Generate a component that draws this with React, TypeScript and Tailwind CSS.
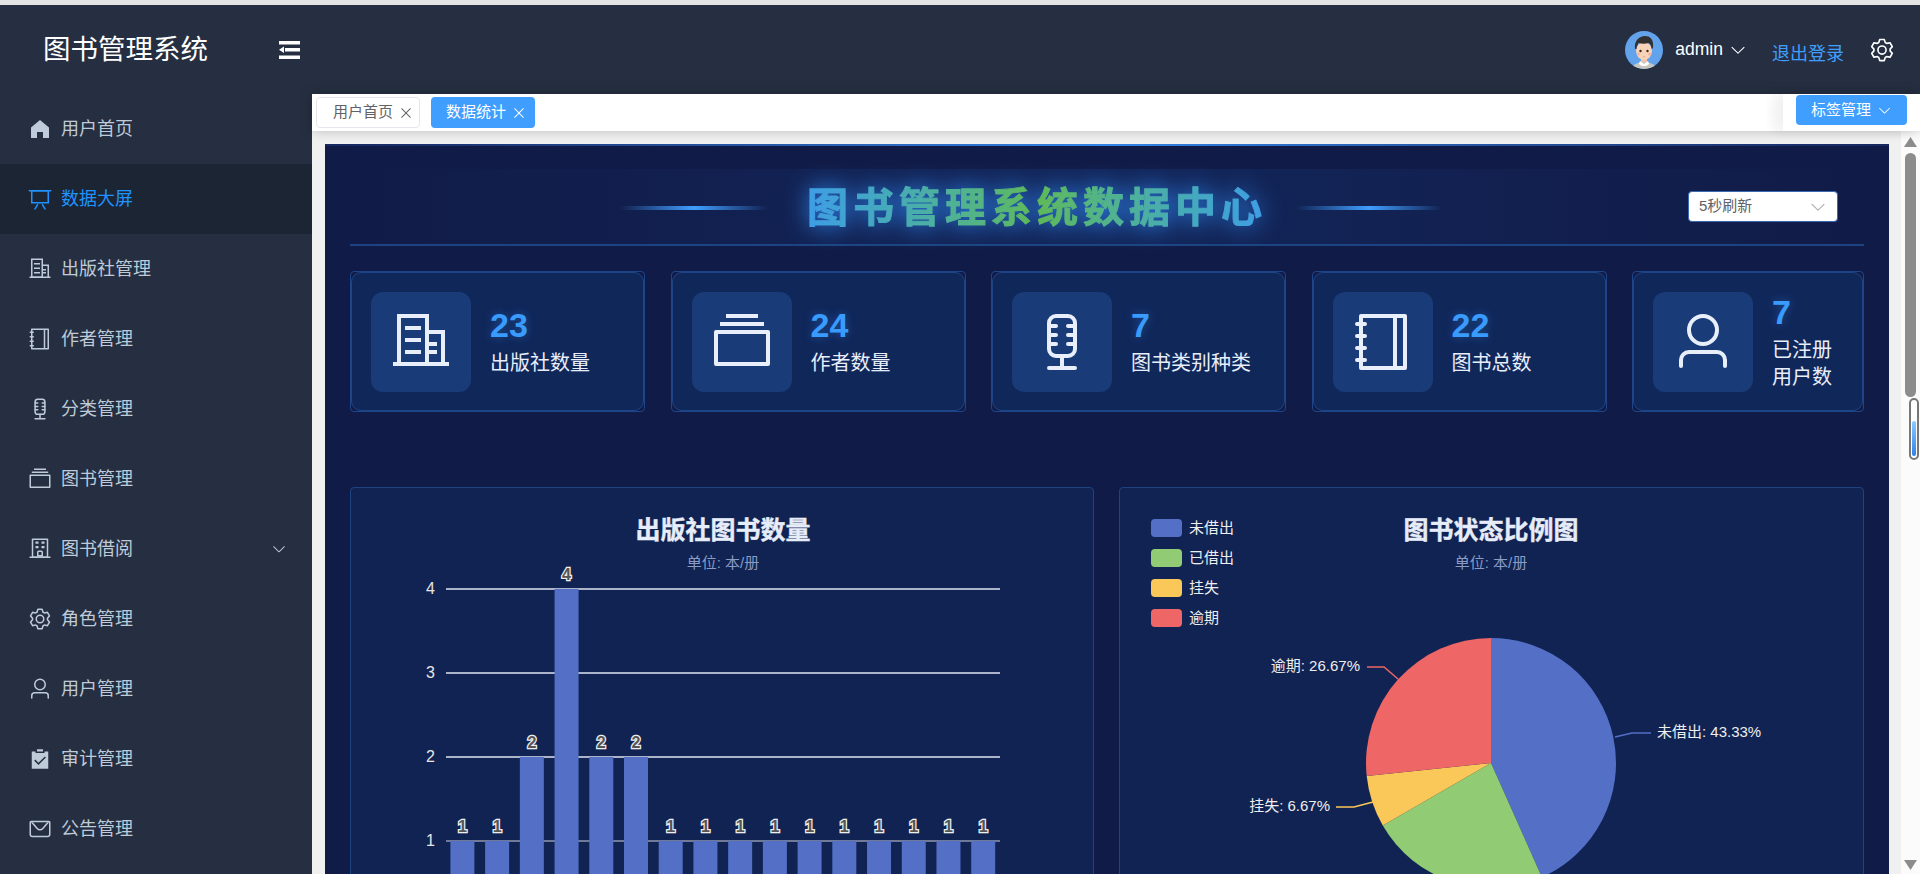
import type { ReactNode } from "react";

const P = {
  home: <path d="M512 128 128 447.936V896h255.936V640H640v256h255.936V447.936z" />,
  board: (
    <>
      <path d="M32 128h960v64H32z" />
      <path d="M192 192v448h640V192zm-64-64h768v576H128z" />
      <path d="M322.176 960H248.32l144.64-250.56 55.424 32zm453.888 0h-73.856L576 741.44l55.424-32z" />
    </>
  ),
  office: (
    <>
      <path d="M192 128v704h384V128zm-64-64h512v832H128z" />
      <path d="M256 256h256v64H256zm0 192h256v64H256zm0 192h256v64H256zm384-128h128v64H640zm0 128h128v64H640z" />
      <path d="M640 320h256v576h-64V384H640z" />
      <path d="M64 832h896v64H64z" />
    </>
  ),
  notebook: (
    <>
      <path d="M192 128v768h640V128zm-32-64h704a32 32 0 0 1 32 32v832a32 32 0 0 1-32 32H160a32 32 0 0 1-32-32V96a32 32 0 0 1 32-32" />
      <path d="M672 128h64v768h-64zM96 192h128q32 0 32 32t-32 32H96q-32 0-32-32t32-32m0 192h128q32 0 32 32t-32 32H96q-32 0-32-32t32-32m0 192h128q32 0 32 32t-32 32H96q-32 0-32-32t32-32m0 192h128q32 0 32 32t-32 32H96q-32 0-32-32t32-32" />
    </>
  ),
  mic: (
    <g fill="none" stroke="currentColor" strokeWidth="64" strokeLinecap="round">
      <rect x="304" y="96" width="416" height="640" rx="112" />
      <path d="M304 256h112M608 256h112M304 400h112M608 400h112M304 544h112M608 544h112M512 736v192M304 928h416" />
    </g>
  ),
  files: <path d="M128 384v448h768V384zm-32-64h832a32 32 0 0 1 32 32v512a32 32 0 0 1-32 32H96a32 32 0 0 1-32-32V352a32 32 0 0 1 32-32m64-128h704v64H160zm96-128h512v64H256z" />,
  school: (
    <>
      <path d="M224 128v704h576V128zm-32-64h640a32 32 0 0 1 32 32v768H160V96a32 32 0 0 1 32-32" />
      <path d="M64 832h896v64H64zm256-640h128v96H320zm256 0h128v96H576zM320 384h128v96H320zm256 0h128v96H576z" />
      <path d="M384 832h256V640a64 64 0 0 0-64-64H448a64 64 0 0 0-64 64zm64-64h128V640H448z" fillRule="evenodd" />
    </>
  ),
  setting: <path d="M600.704 64a32 32 0 0 1 30.464 22.208l35.2 109.376c14.784 7.232 28.928 15.36 42.432 24.512l112.384-24.192a32 32 0 0 1 34.432 15.36L944.32 364.8a32 32 0 0 1-4.032 37.504l-77.12 85.12a357 357 0 0 1 0 49.024l77.12 85.248a32 32 0 0 1 4.032 37.504l-88.704 153.6a32 32 0 0 1-34.432 15.296L708.8 803.904c-13.44 9.088-27.648 17.28-42.368 24.512l-35.264 109.376A32 32 0 0 1 600.704 960H423.296a32 32 0 0 1-30.464-22.208L357.696 828.48a352 352 0 0 1-42.56-24.64l-112.32 24.256a32 32 0 0 1-34.432-15.36L79.68 659.2a32 32 0 0 1 4.032-37.504l77.12-85.248a357 357 0 0 1 0-48.896l-77.12-85.248A32 32 0 0 1 79.68 364.8l88.704-153.6a32 32 0 0 1 34.432-15.296l112.32 24.256c13.568-9.152 27.776-17.408 42.56-24.64l35.2-109.312A32 32 0 0 1 423.232 64H600.64zm-23.424 64H446.72l-36.352 113.088-24.512 11.968a294 294 0 0 0-34.816 20.096l-22.656 15.36-116.224-25.088-65.28 113.152 79.68 88.192-1.92 27.136a293 293 0 0 0 0 40.192l1.92 27.136-79.808 88.192 65.344 113.152 116.224-25.024 22.656 15.296a294 294 0 0 0 34.816 20.096l24.512 11.968L446.72 896h130.688l36.48-113.152 24.448-11.904a288 288 0 0 0 34.752-20.096l22.592-15.296 116.288 25.024 65.28-113.152-79.744-88.192 1.92-27.136a293 293 0 0 0 0-40.256l-1.92-27.136 79.808-88.128-65.344-113.152-116.288 24.96-22.592-15.232a288 288 0 0 0-34.752-20.096l-24.448-11.904L577.344 128zM512 320a192 192 0 1 1 0 384 192 192 0 0 1 0-384m0 64a128 128 0 1 0 0 256 128 128 0 0 0 0-256" />,
  user: <path d="M512 512a192 192 0 1 0 0-384 192 192 0 0 0 0 384m0 64a256 256 0 1 1 0-512 256 256 0 0 1 0 512m320 320v-96a96 96 0 0 0-96-96H288a96 96 0 0 0-96 96v96a32 32 0 1 1-64 0v-96a160 160 0 0 1 160-160h448a160 160 0 0 1 160 160v96a32 32 0 1 1-64 0" />,
  checked: <path d="M704 192h160v736H160V192h160.064v64H704zM311.616 537.28l-45.312 45.248L447.36 763.52l316.8-316.8-45.312-45.184L447.36 673.024zM384 192V96h256v96z" />,
  message: (
    <>
      <path d="M128 224v512a64 64 0 0 0 64 64h640a64 64 0 0 0 64-64V224zm0-64h768a64 64 0 0 1 64 64v512a128 128 0 0 1-128 128H192A128 128 0 0 1 64 736V224a64 64 0 0 1 64-64" />
      <path d="M904 224 656.512 506.88a192 192 0 0 1-289.024 0L120 224zm-698.944 0 210.56 240.704a128 128 0 0 0 192.704 0L818.944 224H205.056" />
    </>
  ),
  down: <path d="M831.872 340.864 512 652.672 192.128 340.864a30.592 30.592 0 0 0-42.752 0 29.12 29.12 0 0 0 0 41.6L489.664 714.24a32 32 0 0 0 44.672 0l340.288-331.712a29.12 29.12 0 0 0 0-41.728 30.592 30.592 0 0 0-42.752 0z" />,
  close: <path d="M764.288 214.592 512 466.88 259.712 214.592a31.936 31.936 0 0 0-45.12 45.12L466.752 512 214.528 764.224a31.936 31.936 0 1 0 45.12 45.184L512 557.184l252.288 252.288a31.936 31.936 0 0 0 45.12-45.12L557.12 512.064l252.288-252.352a31.936 31.936 0 1 0-45.12-45.184z" />,
};

function Icon({ name, className }: { name: keyof typeof P; className?: string }) {
  return (
    <svg viewBox="0 0 1024 1024" fill="currentColor" className={className}>
      {P[name]}
    </svg>
  );
}

const menu: { label: string; icon: keyof typeof P; active?: boolean; arrow?: boolean }[] = [
  { label: "用户首页", icon: "home" },
  { label: "数据大屏", icon: "board", active: true },
  { label: "出版社管理", icon: "office" },
  { label: "作者管理", icon: "notebook" },
  { label: "分类管理", icon: "mic" },
  { label: "图书管理", icon: "files" },
  { label: "图书借阅", icon: "school", arrow: true },
  { label: "角色管理", icon: "setting" },
  { label: "用户管理", icon: "user" },
  { label: "审计管理", icon: "checked" },
  { label: "公告管理", icon: "message" },
];

const stats: { value: number; label: string; icon: keyof typeof P }[] = [
  { value: 23, label: "出版社数量", icon: "office" },
  { value: 24, label: "作者数量", icon: "files" },
  { value: 7, label: "图书类别种类", icon: "mic" },
  { value: 22, label: "图书总数", icon: "notebook" },
  { value: 7, label: "已注册用户数", icon: "user" },
];

const barValues = [1, 1, 2, 4, 2, 2, 1, 1, 1, 1, 1, 1, 1, 1, 1, 1];
const gridY: Record<number, number> = { 4: 589, 3: 673, 2: 757, 1: 841 };

const pieData = [
  { name: "未借出", pct: 43.33, color: "#5470c6" },
  { name: "已借出", pct: 23.33, color: "#91cc75" },
  { name: "挂失", pct: 6.67, color: "#fac858" },
  { name: "逾期", pct: 26.67, color: "#ee6666" },
];

function wedge(cx: number, cy: number, r: number, from: number, to: number) {
  const a = (from / 100) * Math.PI * 2;
  const b = (to / 100) * Math.PI * 2;
  const large = to - from > 50 ? 1 : 0;
  return `M${cx} ${cy}L${cx + r * Math.sin(a)} ${cy - r * Math.cos(a)}A${r} ${r} 0 ${large} 1 ${cx + r * Math.sin(b)} ${cy - r * Math.cos(b)}Z`;
}

function Avatar() {
  return (
    <svg viewBox="0 0 38 38" className="h-[38px] w-[38px] shrink-0">
      <defs>
        <clipPath id="av">
          <circle cx="19" cy="19" r="19" />
        </clipPath>
      </defs>
      <g clipPath="url(#av)">
        <rect width="38" height="38" fill="#62a3ec" />
        <path d="M7 38c1-5 6-7 12-7s11 2 12 7z" fill="#c9c6c2" />
        <path d="M15 30l4 3 4-3 1 3-3 2h-4l-3-2z" fill="#fff" />
        <rect x="16" y="25" width="6" height="6" fill="#f2c2a4" />
        <ellipse cx="19" cy="20" rx="8" ry="9" fill="#f8d3b8" />
        <path d="M10 18c-1-8 4-13 10-13 5 0 9 3 8 12l-1.500 1c0-3-1-5-3-6-3 1-7 1-10 0-1 2-2 4-2 6z" fill="#33312f" />
        <circle cx="15.500" cy="20" r="1.200" fill="#3a2a20" />
        <circle cx="22.500" cy="20" r="1.200" fill="#3a2a20" />
        <circle cx="13.500" cy="23" r="1.500" fill="#f4b3a2" />
        <circle cx="24.500" cy="23" r="1.500" fill="#f4b3a2" />
        <path d="M17.500 25.500h3l-1.500 1z" fill="#e58a78" />
      </g>
    </svg>
  );
}

function Tag({ label, active }: { label: string; active?: boolean }) {
  return (
    <div
      className={
        active
          ? "flex h-[31px] w-[104px] items-center rounded-[4px] bg-[#409eff] pl-[15px] text-[15px] text-white"
          : "flex h-[31px] w-[104px] items-center rounded-[4px] border border-[#e4e7ed] bg-white pl-4 text-[15px] text-[#606266]"
      }
    >
      <span className="w-[60px]">{label}</span>
      <Icon name="close" className="ml-[5px] h-4 w-4" />
    </div>
  );
}

function StatCard({ value, label, icon, wide }: { value: number; label: string; icon: keyof typeof P; wide: boolean }) {
  return (
    <div className={wide ? "h-[141px] w-[295px] rounded-[4px] border border-[#1e4587]" : "h-[141px] min-w-0 flex-1 rounded-[4px] border border-[#1e4587]"}>
      <div className="flex h-full items-center rounded-[10px] border border-[#1e4587] bg-[#10275a] pl-[19px] pr-[20px]">
        <div className="flex h-[100px] w-[100px] shrink-0 items-center justify-center rounded-[12px] bg-[#193c79] text-[#e8eefa]">
          <Icon name={icon} className="h-16 w-16" />
        </div>
        <div className="ml-[19px] min-w-0 flex-1">
          <div className="mb-[6px] h-[38px] text-[34px] leading-[38px] font-bold text-[#3a9bff] [text-shadow:0_0_10px_rgba(64,158,255,0.35)]">{value}</div>
          <div className="text-[20px] leading-[27px] text-[#e8eefa]">{label}</div>
        </div>
      </div>
    </div>
  );
}

function BarChart() {
  return (
    <svg className="block h-[500px] w-full" fontFamily="'Liberation Sans','Noto Sans CJK SC',sans-serif">
      <g transform="translate(-351 -488)">
        <text x="723" y="539" textAnchor="middle" fontSize="25" fontWeight="700" fill="#e6ecf8" stroke="#e6ecf8" strokeWidth="0.400">出版社图书数量</text>
        <text x="723" y="568" textAnchor="middle" fontSize="15" fill="#8a9bc4">单位: 本/册</text>
        {[4, 3, 2, 1].map((v) => (
          <g key={v}>
            <line x1="446" x2="1000" y1={gridY[v]} y2={gridY[v]} stroke={v === 1 ? "#8f98b0" : "#e0e6f1"} strokeWidth="1.500" />
            <text x="435" y={gridY[v] + 5} textAnchor="end" fontSize="16" fill="#e6e6e6">{v}</text>
          </g>
        ))}
        {barValues.map((v, i) => {
          const cx = 462.4 + 34.72 * i;
          return (
            <g key={i}>
              <rect x={cx - 12} y={gridY[v]} width="24" height={900 - gridY[v]} fill="#5470c6" />
              <text x={cx} y={gridY[v] - 9} textAnchor="middle" fontSize="16" fontWeight="700" fill="#555" stroke="#eeeeee" strokeWidth="2.500" paintOrder="stroke">{v}</text>
            </g>
          );
        })}
      </g>
    </svg>
  );
}

function PieChart() {
  let acc = 0;
  return (
    <svg className="block h-[500px] w-full" fontFamily="'Liberation Sans','Noto Sans CJK SC',sans-serif">
      <g transform="translate(-1120 -488)">
        {pieData.map((d, i) => (
          <g key={d.name}>
            <rect x="1151" y={519 + i * 30} width="31" height="18" rx="4" fill={d.color} />
            <text x="1189" y={533 + i * 30} fontSize="15" fill="#eeeeee">{d.name}</text>
          </g>
        ))}
        <text x="1491" y="539" textAnchor="middle" fontSize="25" fontWeight="700" fill="#e6ecf8" stroke="#e6ecf8" strokeWidth="0.400">图书状态比例图</text>
        <text x="1491" y="568" textAnchor="middle" fontSize="15" fill="#8a9bc4">单位: 本/册</text>
        {pieData.map((d) => {
          const from = acc;
          acc += d.pct;
          return <path key={d.name} d={wedge(1491, 763, 125, from, acc)} fill={d.color} />;
        })}
        <polyline points="1615,737 1632,733 1651,733" fill="none" stroke="#5470c6" strokeWidth="1.500" />
        <polyline points="1398,679 1384,667 1367,667" fill="none" stroke="#ee6666" strokeWidth="1.500" />
        <polyline points="1373,802 1354,807 1336,807" fill="none" stroke="#fac858" strokeWidth="1.500" />
        <text x="1657" y="737" fontSize="15" fill="#eeeeee">未借出: 43.33%</text>
        <text x="1360" y="671" textAnchor="end" fontSize="15" fill="#eeeeee">逾期: 26.67%</text>
        <text x="1330" y="811" textAnchor="end" fontSize="15" fill="#eeeeee">挂失: 6.67%</text>
      </g>
    </svg>
  );
}

function Scrollbar() {
  return (
    <div className="flex w-[19px] shrink-0 flex-col items-start bg-[#fbfbfb] pl-[3px] pt-[6px]">
      <svg viewBox="0 0 13 10" className="h-[10px] w-[13px] fill-[#8c8c8c]">
        <path d="M6.500 0 13 10H0z" />
      </svg>
      <div className="ml-px mt-[6px] h-[244px] w-[11px] shrink-0 rounded-full bg-[#8c8c8c]" />
      <div className="ml-[5px] mt-px flex h-[62px] w-[10px] shrink-0 items-end justify-center rounded-full border-2 border-[#777] bg-white pb-[2px]">
        <div className="h-[35px] w-[4px] rounded-full bg-linear-to-b from-[#8ccaff] to-[#2f80ed]" />
      </div>
      <svg viewBox="0 0 13 10" className="mb-[4px] mt-auto h-[10px] w-[13px] fill-[#8c8c8c]">
        <path d="M0 0h13L6.500 10z" />
      </svg>
    </div>
  );
}

export default function App() {
  return (
    <div className="flex h-screen w-full flex-col overflow-hidden bg-[#f0f0f0] font-['Liberation_Sans','Noto_Sans_CJK_SC',sans-serif]">
      <div className="h-[5px] shrink-0 bg-[#e3e3e3]" />
      <header className="flex h-[89px] shrink-0 items-center bg-[#252f41] pr-[25px] text-white">
        <div className="ml-[43px] w-[236px] text-[27.500px] whitespace-nowrap">图书管理系统</div>
        <svg viewBox="0 0 21 18" className="h-[18px] w-[21px] fill-white">
          <path d="M0 0h21v3.500H0zM6 7h15v3.500H6zM0 14.500h21V18H0zM0 8.700 5 5.500v6.500z" />
        </svg>
        <div className="ml-auto flex items-center">
          <Avatar />
          <span className="ml-3 text-[17.500px]">admin</span>
          <Icon name="down" className="ml-[6px] h-[18px] w-[18px]" />
          <span className="ml-[25px] mt-[9px] text-[18px] text-[#409eff]">退出登录</span>
          <Icon name="setting" className="ml-[25px] h-[26px] w-[26px]" />
        </div>
      </header>
      <div className="flex min-h-0 flex-1">
        <aside className="w-[312px] shrink-0 bg-[#252f41]">
          {menu.map((m) => (
            <div
              key={m.label}
              className={
                m.active
                  ? "flex h-[70px] items-center bg-[#1c2533] pl-7 pr-[25px] text-[18px] text-[#1f93ff]"
                  : "flex h-[70px] items-center pl-7 pr-[25px] text-[18px] text-[#bfcbd9]"
              }
            >
              <Icon name={m.icon} className="h-6 w-6 shrink-0" />
              <span className="ml-[9px] flex-1">{m.label}</span>
              {m.arrow && <Icon name="down" className="h-4 w-4" />}
            </div>
          ))}
        </aside>
        <main className="flex min-w-0 flex-1 flex-col">
          <div className="relative z-10 flex h-[37px] shrink-0 items-start bg-white shadow-[0_0_12px_rgba(0,0,0,0.22)]">
            <div className="flex flex-1 gap-[11px] pl-1 pt-[3px]">
              <Tag label="用户首页" />
              <Tag label="数据统计" active />
            </div>
            <div className="flex h-full w-[137px] justify-center bg-white pt-px shadow-[-10px_0_12px_rgba(0,0,0,0.06)]">
              <div className="flex h-[30px] w-[111px] items-center rounded-[4px] bg-[#409eff] pl-[15px] text-[15px] text-white">
                标签管理
                <Icon name="down" className="ml-[6px] h-[15px] w-[15px]" />
              </div>
            </div>
          </div>
          <div className="flex min-h-0 flex-1">
            <div className="min-w-0 flex-1 overflow-hidden pl-[13px] pr-3 pt-[13px]">
              <div className="h-[1000px] bg-[#111b47] px-[25px]">
                <div className="-mx-[25px] h-[2px] bg-linear-to-r from-[#17275f] via-[#3384e6] to-[#17275f]" />
                <div className="mt-[23px] flex h-[77px] items-center border-b-2 border-[#1d4482] bg-linear-to-r from-[#111b47] via-[#12265a] to-[#111b47]">
                  <div className="w-[270px] shrink-0" />
                  <div className="mt-[3px] h-[4px] w-[148px] bg-linear-to-r from-transparent via-[#409eff] to-transparent" />
                  <div className="ml-[39px] mr-[29px] mt-[3px] bg-linear-to-r from-[#3f9de6] via-[#5fb957] to-[#3f9de6] bg-clip-text text-[41px] leading-[50px] font-bold tracking-[5px] whitespace-nowrap text-transparent drop-shadow-[0_0_12px_#2f86ee] [-webkit-text-stroke:1px_transparent]">
                    图书管理系统数据中心
                  </div>
                  <div className="mt-[3px] h-[4px] w-[146px] bg-linear-to-r from-transparent via-[#409eff] to-transparent" />
                  <div className="ml-auto mr-[26px] flex h-[31px] w-[150px] items-center rounded-[4px] border border-[#3a6ab5] bg-white pl-[10px] pr-[10px] text-[15px] text-[#606266]">
                    5秒刷新
                    <Icon name="down" className="ml-auto h-[18px] w-[18px] text-[#a8abb2]" />
                  </div>
                </div>
                <div className="mt-[25px] flex gap-[25.500px]">
                  {stats.map((s, i) => (
                    <StatCard key={s.label} {...s} wide={i < 4} />
                  ))}
                </div>
                <div className="mt-[75px] flex gap-[25px]">
                  <div className="w-[744px] rounded-[4px] border border-[#1d4380] bg-[#112353]">
                    <BarChart />
                  </div>
                  <div className="flex-1 rounded-[4px] border border-[#1d4380] bg-[#112353]">
                    <PieChart />
                  </div>
                </div>
              </div>
            </div>
            <Scrollbar />
          </div>
        </main>
      </div>
    </div>
  );
}
